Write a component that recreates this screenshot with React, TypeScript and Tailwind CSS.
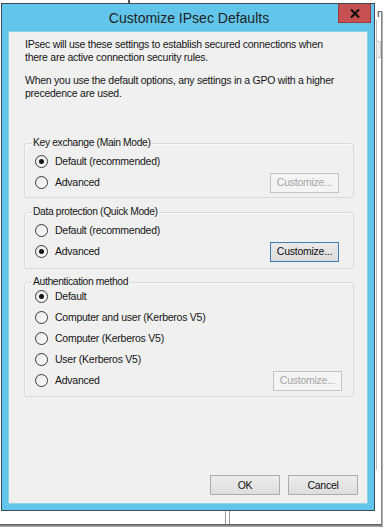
import React from "react";

const font = "font-['Liberation_Sans',Arial,sans-serif]";
const body = "text-[10.5px] tracking-[-0.25px] text-[#151515]";

function Radio({ checked }: { checked?: boolean }) {
  return (
    <span className="w-[13px] h-[13px] shrink-0 rounded-full border border-[#3a3a3a] bg-gradient-to-br from-[#e6e6e6] to-white flex items-center justify-center">
      {checked && <span className="w-[5px] h-[5px] rounded-full bg-[#141414]" />}
    </span>
  );
}

function Btn({
  children,
  variant = "normal",
  className = "",
}: {
  children: React.ReactNode;
  variant?: "normal" | "disabled" | "focus";
  className?: string;
}) {
  const v =
    variant === "disabled"
      ? "border-[#c4c4c4] bg-[#f4f4f4] text-[#a6a6a6]"
      : variant === "focus"
      ? "border-[#3c7fb1] bg-gradient-to-b from-[#eaeaea] to-[#dcdcdc] text-[#111]"
      : "border-[#acacac] bg-gradient-to-b from-[#ececec] to-[#dedede] text-[#111]";
  return (
    <div
      className={`w-[69px] h-[20px] border flex items-center justify-center text-[10.5px] tracking-[-0.25px] leading-none ${v} ${className}`}
    >
      {children}
    </div>
  );
}

function Row({
  label,
  checked,
  button,
}: {
  label: string;
  checked?: boolean;
  button?: React.ReactNode;
}) {
  return (
    <div className="h-[21px] flex items-center">
      <Radio checked={checked} />
      <span className={`ml-[7px] flex-1 whitespace-nowrap ${body}`}>{label}</span>
      {button}
    </div>
  );
}

function Group({
  title,
  children,
  className = "",
}: {
  title: string;
  children: React.ReactNode;
  className?: string;
}) {
  return (
    <div
      className={`relative border border-[#d9d9d9] rounded-[3px] shadow-[inset_1px_1px_0_#fbfbfb] ml-[15px] mr-[13px] pl-[10px] pr-[14px] ${className}`}
    >
      <span className="absolute left-[7px] top-[-8px] px-[1px] bg-[#f0f0f0] text-[10.3px] tracking-[-0.35px] leading-[14px] text-[#151515] whitespace-nowrap">
        {title}
      </span>
      {children}
    </div>
  );
}

export default function App() {
  return (
    <div className={`relative w-[385px] h-[529px] bg-white overflow-hidden pt-[3px] pl-[1px] ${font}`}>
      {/* background window hints */}
      <div className="absolute left-[128px] top-0 w-[2px] h-[3px] bg-[#555]" />
      <div className="absolute left-[376px] top-[20px] w-[1px] h-[450px] bg-[#bdbdbd]" />
      <div className="absolute left-[376px] top-[41px] w-[5px] h-[17px] border border-[#c8c8c8] bg-[#efefef]" />
      <div className="absolute left-[377px] top-[8px] text-[11px] leading-none text-[#444]">n</div>
      <div className="absolute left-[225px] top-[511px] w-[5px] h-[13px] border-x border-[#9a9a9a]" />
      {/* screenshot drop shadow */}
      <div className="absolute left-0 right-[2px] top-[524px] h-[3px] bg-gradient-to-b from-[#505050] to-[#bdbdbd]" />
      <div className="absolute right-[2px] top-[12px] w-[2px] h-[515px] bg-gradient-to-r from-[#707070] to-[#c8c8c8]" />

      {/* dialog window */}
      <div className="relative w-[374px] h-[508px] border border-[#3d4d57] bg-[#62c6ec] flex flex-col">
        <div className="relative h-[27px] shrink-0 flex items-center justify-center">
          <span className="text-[14px] leading-none text-[#1e1e1e] mt-[1px] ml-[2px]">Customize IPsec Defaults</span>
          <div className="absolute right-[3px] top-0 w-[33px] h-[19px] bg-[#c75050] border border-t-0 border-[#9a3a3a] flex items-center justify-center">
            <svg width="10" height="9" viewBox="0 0 10 9">
              <path d="M1 0.5 L9 8.5 M9 0.5 L1 8.5" stroke="#111" strokeWidth="2.2" />
            </svg>
          </div>
        </div>
        <div className="mx-[6px] mb-[6px] flex-1 bg-[#f0f0f0] border border-[#8fd2ec] flex flex-col">
          <div className={`pl-[16px] pt-[6px] leading-[13px] whitespace-nowrap ${body}`}>
            <p>IPsec will use these settings to establish secured connections when<br />there are active connection security rules.</p>
            <p className="mt-[10px]">When you use the default options, any settings in a GPO with a higher<br />precedence are used.</p>
          </div>

          <Group title="Key exchange (Main Mode)" className="mt-[43px] pt-[7px] pb-[4px]">
            <Row label="Default (recommended)" checked />
            <Row label="Advanced" button={<Btn variant="disabled">Customize...</Btn>} />
          </Group>

          <Group title="Data protection (Quick Mode)" className="mt-[14px] pt-[7px] pb-[6px]">
            <Row label="Default (recommended)" />
            <Row label="Advanced" checked button={<Btn variant="focus">Customize...</Btn>} />
          </Group>

          <Group title="Authentication method" className="mt-[13px] pt-[3px] pb-[5px]">
            <Row label="Default" checked />
            <Row label="Computer and user (Kerberos V5)" />
            <Row label="Computer (Kerberos V5)" />
            <Row label="User (Kerberos V5)" />
            <Row label="Advanced" button={<Btn variant="disabled" className="mr-[-3px]">Customize...</Btn>} />
          </Group>

          <div className="flex-1" />
          <div className="flex justify-end gap-[8px] pr-[9px] pb-[8px]">
            <Btn className="w-[70px]">OK</Btn>
            <Btn className="w-[70px]">Cancel</Btn>
          </div>
        </div>
      </div>
    </div>
  );
}
